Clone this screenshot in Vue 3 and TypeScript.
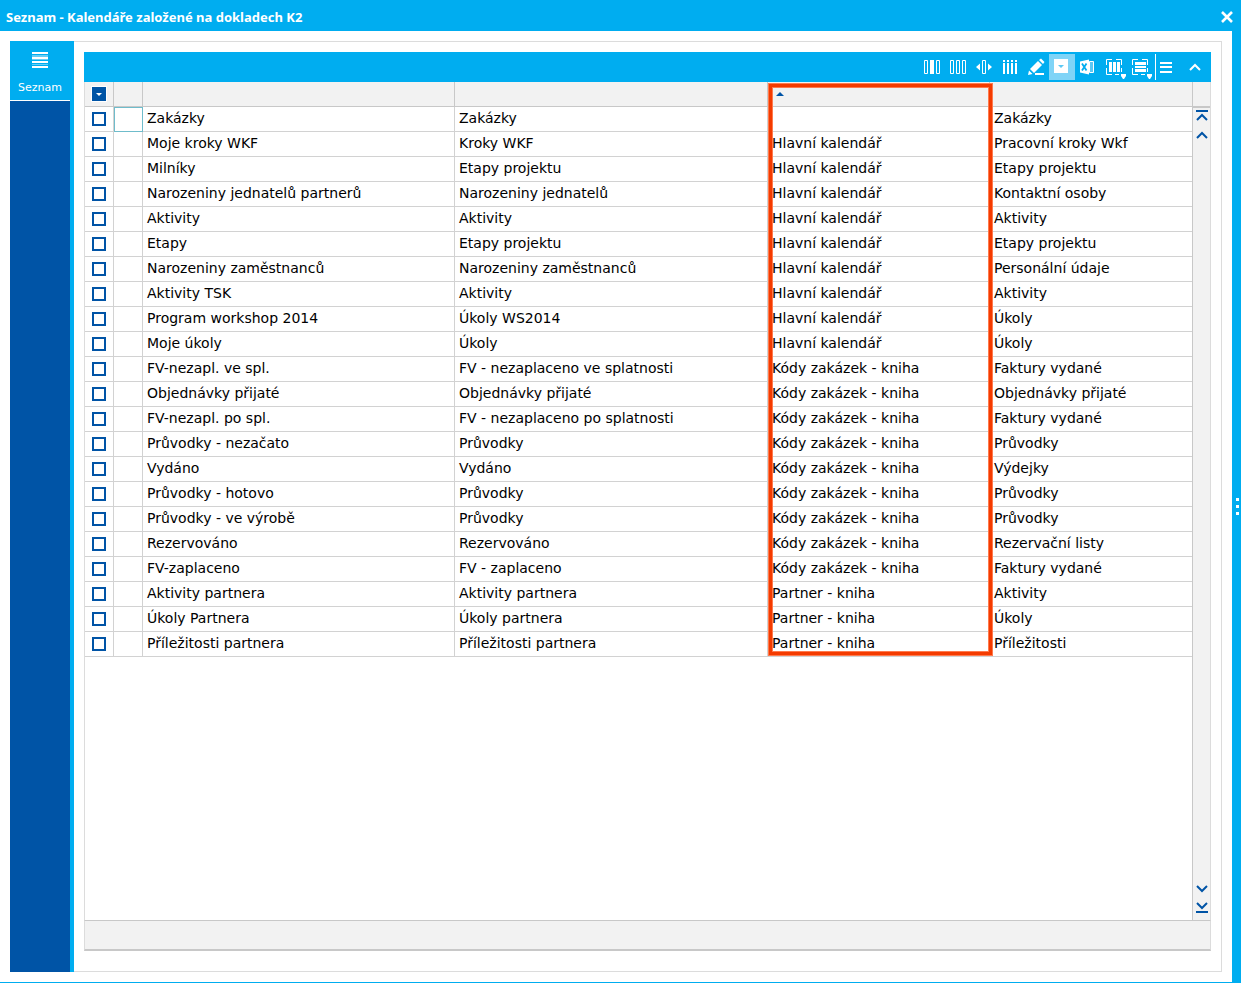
<script setup lang="ts">
import { ref } from 'vue'

interface CalendarRow {
  abbr: string
  name: string
  parent: string
  source: string
}

const main = 'Hlavní kalendář'
const orders = 'Kódy zakázek - kniha'
const partner = 'Partner - kniha'

const make = (abbr: string, name: string, parent: string, source: string): CalendarRow => ({ abbr, name, parent, source })

const rows: CalendarRow[] = [
  make('Zakázky', 'Zakázky', '', 'Zakázky'),
  make('Moje kroky WKF', 'Kroky WKF', main, 'Pracovní kroky Wkf'),
  make('Milníky', 'Etapy projektu', main, 'Etapy projektu'),
  make('Narozeniny jednatelů partnerů', 'Narozeniny jednatelů', main, 'Kontaktní osoby'),
  make('Aktivity', 'Aktivity', main, 'Aktivity'),
  make('Etapy', 'Etapy projektu', main, 'Etapy projektu'),
  make('Narozeniny zaměstnanců', 'Narozeniny zaměstnanců', main, 'Personální údaje'),
  make('Aktivity TSK', 'Aktivity', main, 'Aktivity'),
  make('Program workshop 2014', 'Úkoly WS2014', main, 'Úkoly'),
  make('Moje úkoly', 'Úkoly', main, 'Úkoly'),
  make('FV-nezapl. ve spl.', 'FV - nezaplaceno ve splatnosti', orders, 'Faktury vydané'),
  make('Objednávky přijaté', 'Objednávky přijaté', orders, 'Objednávky přijaté'),
  make('FV-nezapl. po spl.', 'FV - nezaplaceno po splatnosti', orders, 'Faktury vydané'),
  make('Průvodky - nezačato', 'Průvodky', orders, 'Průvodky'),
  make('Vydáno', 'Vydáno', orders, 'Výdejky'),
  make('Průvodky - hotovo', 'Průvodky', orders, 'Průvodky'),
  make('Průvodky - ve výrobě', 'Průvodky', orders, 'Průvodky'),
  make('Rezervováno', 'Rezervováno', orders, 'Rezervační listy'),
  make('FV-zaplaceno', 'FV - zaplaceno', orders, 'Faktury vydané'),
  make('Aktivity partnera', 'Aktivity partnera', partner, 'Aktivity'),
  make('Úkoly Partnera', 'Úkoly partnera', partner, 'Úkoly'),
  make('Příležitosti partnera', 'Příležitosti partnera', partner, 'Příležitosti'),
]

const selected = ref<boolean[]>(rows.map(() => false))
</script>

<template>
  <div class="window">
    <header class="titlebar">
      <h1 class="title">Seznam - Kalendáře založené na dokladech K2</h1>
      <button class="close" type="button" aria-label="Zavřít">
        <svg width="12" height="12" viewBox="0 0 12 12"><path d="M1 1L11 11M11 1L1 11" stroke="#fff" stroke-width="2.6" fill="none" /></svg>
      </button>
    </header>

    <div class="body">
      <main class="workspace">
        <nav class="sidebar">
          <button class="tab" type="button">
            <svg width="16" height="16" viewBox="0 0 16 16" fill="#fff">
              <path d="M0 0h16v2H0zM0 5h16v2H0zM0 9h16v2H0zM0 14h16v2H0z" />
              <path d="M0 3h16v2H0zM0 7h16v1H0zM0 12h16v1H0z" opacity=".4" />
            </svg>
            <span>Seznam</span>
          </button>
        </nav>

        <section class="panel">
          <div class="grid">
            <div class="toolbar">
              <button class="tool" type="button" aria-label="Sloupec">
                <svg width="26" height="26" viewBox="0 0 26 26" fill="none" stroke="#fff">
                  <path d="M5.5 6.5h3v13h-3zM17.5 6.5h3v13h-3z" /><path d="M11 6h4v14h-4z" fill="#fff" stroke="none" />
                </svg>
              </button>
              <button class="tool" type="button" aria-label="Sloupce">
                <svg width="26" height="26" viewBox="0 0 26 26" fill="none" stroke="#fff">
                  <path d="M5.5 6.5h3v13h-3zM11.5 6.5h3v13h-3zM17.5 6.5h3v13h-3z" />
                </svg>
              </button>
              <button class="tool" type="button" aria-label="Šířka sloupců">
                <svg width="26" height="26" viewBox="0 0 26 26" fill="#fff">
                  <path d="M11.5 6.5h3v13h-3z" fill="none" stroke="#fff" /><path d="M5 13l4-3.500v7zM21 13l-4-3.500v7z" />
                </svg>
              </button>
              <button class="tool" type="button" aria-label="Pevné sloupce">
                <svg width="26" height="26" viewBox="0 0 26 26" fill="#fff">
                  <path d="M6 6h2v2H6zM10 6h2v2h-2zM14 6h2v2h-2zM18 6h2v2h-2zM6 9h2v11H6zM10 9h2v11h-2zM14 9h2v11h-2zM18 9h2v11h-2z" />
                </svg>
              </button>
              <button class="tool" type="button" aria-label="Upravit">
                <svg width="26" height="26" viewBox="0 0 26 26" fill="#fff">
                  <path d="M5 21l1-4.500 3.500 3.500zM7 15l8-8 4 4-8 8zM16 6l2-1.500 3.500 3.500-1.500 2z" /><path d="M12 19h9v2h-9z" />
                </svg>
              </button>
              <button class="tool active" type="button" aria-label="Filtr">
                <svg width="26" height="26" viewBox="0 0 26 26">
                  <path d="M5 5h14v14H5z" fill="#fff" /><path d="M9 11h6l-3 3z" fill="#5cc8f4" />
                </svg>
              </button>
              <button class="tool" type="button" aria-label="Excel">
                <svg width="26" height="26" viewBox="0 0 26 26">
                  <path d="M5 7.500L14 5.500v15L5 18.500z" fill="#fff" /><path d="M14.5 7.5h4v11h-4z" fill="#5cc8f4" stroke="#fff" />
                  <path d="M7 9.500l4.500 7M11.500 9.500L7 16.500" stroke="#00adf0" stroke-width="1.800" />
                </svg>
              </button>
              <button class="tool" type="button" aria-label="Označené sloupce">
                <svg width="26" height="26" viewBox="0 0 26 26" fill="#fff">
                  <path d="M5.5 11V5.500H11M15 5.500h5.500V11M5.500 14v6.500H11M14 20.500h4M20.500 14v4" fill="none" stroke="#fff" />
                  <path d="M8 8h3v10H8zM12 8h3v10h-3zM16 8h3v10h-3z" /><path d="M20 20h5v2l-2 3h-1l-2-3z" />
                </svg>
              </button>
              <button class="tool" type="button" aria-label="Označené řádky">
                <svg width="26" height="26" viewBox="0 0 26 26" fill="#fff">
                  <path d="M5.5 11V5.500H11M15 5.500h5.500V11M5.500 14v6.500H11M14 20.500h4M20.500 14v4" fill="none" stroke="#fff" />
                  <path d="M8 8h11v3H8zM8 12h11v2H8zM8 15h11v3H8z" /><path d="M20 20h5v2l-2 3h-1l-2-3z" />
                </svg>
              </button>
              <span class="separator"></span>
              <button class="menu" type="button" aria-label="Nabídka">
                <svg width="12" height="11" viewBox="0 0 12 11"><path d="M0 0h12v2H0zM0 4h12v2H0zM0 9h12v2H0z" fill="#fff" /></svg>
              </button>
              <button class="tool collapse" type="button" aria-label="Sbalit">
                <svg width="12" height="8" viewBox="0 0 12 8"><path d="M1 7l5-5 5 5" stroke="#fff" stroke-width="2" fill="none" /></svg>
              </button>
            </div>

            <div class="content">
              <div class="list">
                <div class="table-wrap">
                  <table>
                    <colgroup>
                      <col class="c-check" /><col class="c-flag" /><col class="c-abbr" /><col class="c-name" /><col class="c-parent" /><col />
                    </colgroup>
                    <thead>
                      <tr>
                        <th class="check">
                          <button class="select-menu" type="button" aria-label="Výběr záznamů">
                            <svg width="6" height="3" viewBox="0 0 6 3"><path d="M0 0h6L3 3z" fill="#fff" /></svg>
                          </button>
                        </th>
                        <th></th>
                        <th></th>
                        <th></th>
                        <th class="sorted" aria-sort="ascending">
                          <svg width="8" height="4" viewBox="0 0 8 4"><path d="M0 4h8L4 0z" fill="#0054a6" /></svg>
                        </th>
                        <th></th>
                      </tr>
                    </thead>
                    <tbody>
                      <tr v-for="(row, i) in rows" :key="i">
                        <td class="check"><input v-model="selected[i]" type="checkbox" :aria-label="row.abbr" /></td>
                        <td :class="{ focused: i === 0 }"></td>
                        <td>{{ row.abbr }}</td>
                        <td>{{ row.name }}</td>
                        <td>{{ row.parent }}</td>
                        <td>{{ row.source }}</td>
                      </tr>
                    </tbody>
                  </table>
                  <div class="highlight"></div>
                </div>
              </div>
              <div class="scroller">
                <div class="corner"></div>
                <button type="button" aria-label="Na začátek">
                  <svg width="12" height="12" viewBox="0 0 12 12" fill="none" stroke="#0054a6" stroke-width="2"><path d="M0 1h12M1 10l5-5 5 5" /></svg>
                </button>
                <button type="button" aria-label="Nahoru">
                  <svg width="12" height="8" viewBox="0 0 12 8" fill="none" stroke="#0054a6" stroke-width="2"><path d="M1 7l5-5 5 5" /></svg>
                </button>
                <div class="spacer"></div>
                <button type="button" aria-label="Dolů">
                  <svg width="12" height="8" viewBox="0 0 12 8" fill="none" stroke="#0054a6" stroke-width="2"><path d="M1 1l5 5 5-5" /></svg>
                </button>
                <button type="button" aria-label="Na konec">
                  <svg width="12" height="12" viewBox="0 0 12 12" fill="none" stroke="#0054a6" stroke-width="2"><path d="M1 2l5 5 5-5M0 11h12" /></svg>
                </button>
              </div>
            </div>

            <footer class="summary"></footer>
          </div>
        </section>
      </main>
      <aside class="handle"><i></i><i></i><i></i></aside>
    </div>
  </div>
</template>

<style>
body {
  margin: 0;
  background: #fff;
}
</style>

<style scoped>
* {
  box-sizing: border-box;
}
.window {
  display: flex;
  flex-direction: column;
  min-height: 100vh;
  color: #000;
  font-family: Verdana, "DejaVu Sans", sans-serif;
  font-size: 14px;
}
button {
  display: flex;
  align-items: center;
  justify-content: center;
  padding: 0;
  border: 0;
  background: none;
  font-family: inherit;
}
svg {
  display: block;
  flex: none;
}
.titlebar {
  display: flex;
  align-items: center;
  justify-content: space-between;
  height: 31px;
  padding: 2px 7px 0 6px;
  background: #00adf0;
}
.title {
  margin: 0;
  color: #fff;
  font: bold 13px/18px "Segoe UI", "Noto Sans", sans-serif;
}
.close {
  width: 14px;
  height: 20px;
}
.body {
  display: flex;
  flex: 1;
  border-bottom: 1px solid #00adf0;
}
.workspace {
  display: flex;
  flex: 1;
  min-width: 0;
  padding: 10px;
}
.sidebar {
  width: 64px;
  border-right: 4px solid #00adf0;
  background: #0054a6;
}
.tab {
  flex-direction: column;
  justify-content: flex-start;
  gap: 13px;
  width: 60px;
  height: 60px;
  padding-top: 11px;
  border-bottom: 1px solid #fff;
  background: #00adf0;
  color: #fff;
  font-size: 11px;
  line-height: 14px;
}
.panel {
  display: flex;
  flex: 1;
  min-width: 0;
  padding: 10px 10px 20px;
  border: 1px solid #dcdcdc;
  border-left: 0;
}
.grid {
  display: flex;
  flex: 1;
  flex-direction: column;
  min-width: 0;
}
.toolbar {
  display: flex;
  align-items: center;
  justify-content: flex-end;
  height: 30px;
  padding-right: 3px;
  background: #00adf0;
}
.tool {
  width: 26px;
  height: 26px;
}
.active {
  background: #7fd4f7;
}
.separator {
  width: 1px;
  height: 26px;
  margin-left: 2px;
  background: #fff;
}
.menu {
  width: 20px;
  height: 26px;
}
.collapse {
  margin-left: 6px;
}
.content {
  display: flex;
  flex: 1;
  border: 1px solid #dcdcdc;
  border-width: 0 1px;
}
.list {
  flex: 1;
  min-width: 0;
}
.table-wrap {
  position: relative;
}
table {
  width: 100%;
  border-collapse: separate;
  border-spacing: 0;
  table-layout: fixed;
}
.c-check,
.c-flag {
  width: 29px;
}
.c-abbr {
  width: 312px;
}
.c-name {
  width: 313px;
}
.c-parent {
  width: 222px;
}
th,
td {
  height: 25px;
  padding: 0 4px;
  border-right: 1px solid #d2d2d2;
  border-bottom: 1px solid #d2d2d2;
  line-height: 22px;
  text-align: left;
  vertical-align: top;
  white-space: nowrap;
}
th {
  background: #f2f2f2;
  border-color: #c8c8c8;
  vertical-align: middle;
}
th:last-child,
td:last-child {
  border-right: 0;
}
.check {
  padding: 0 7px;
  vertical-align: middle;
}
.select-menu {
  width: 14px;
  height: 14px;
  background: #0054a6;
  outline: 1px solid #fff;
}
input {
  display: block;
  width: 14px;
  height: 14px;
  margin: 0;
  border: 2px solid #0054a6;
  background: #fff;
  appearance: none;
}
input:checked {
  background: #0054a6;
}
.focused {
  border-right-color: #6fbccb;
  border-bottom-color: #6fbccb;
  box-shadow: inset 1px 1px 0 #6fbccb;
}
.sorted {
  padding-left: 8px;
}
.highlight {
  position: absolute;
  top: 1px;
  bottom: 1px;
  left: 683px;
  width: 225px;
  border: 1px solid #ff7a4d;
  box-shadow: inset 0 0 0 3px #f43b00, inset 0 0 0 4px #ff7a4d;
  pointer-events: none;
}
.scroller {
  display: flex;
  flex-direction: column;
  align-items: center;
  gap: 8px;
  width: 18px;
  padding-bottom: 7px;
  border-left: 1px solid #c8c8c8;
  background: #f2f2f2;
}
.corner {
  align-self: stretch;
  height: 26px;
  margin-bottom: -6px;
  border-bottom: 2px solid #c8c8c8;
}
.scroller .corner + button {
  margin-bottom: 1px;
}
.spacer {
  flex: 1;
}
.summary {
  height: 31px;
  border: 1px solid #dcdcdc;
  border-top-color: #c8c8c8;
  border-bottom: 2px solid #c8c8c8;
  background: #f2f2f2;
}
.handle {
  display: flex;
  flex-direction: column;
  align-items: flex-end;
  justify-content: center;
  gap: 4px;
  width: 9px;
  padding-right: 2px;
  background: #00adf0;
}
.handle i {
  width: 3px;
  height: 3px;
  background: #fff;
}
</style>
